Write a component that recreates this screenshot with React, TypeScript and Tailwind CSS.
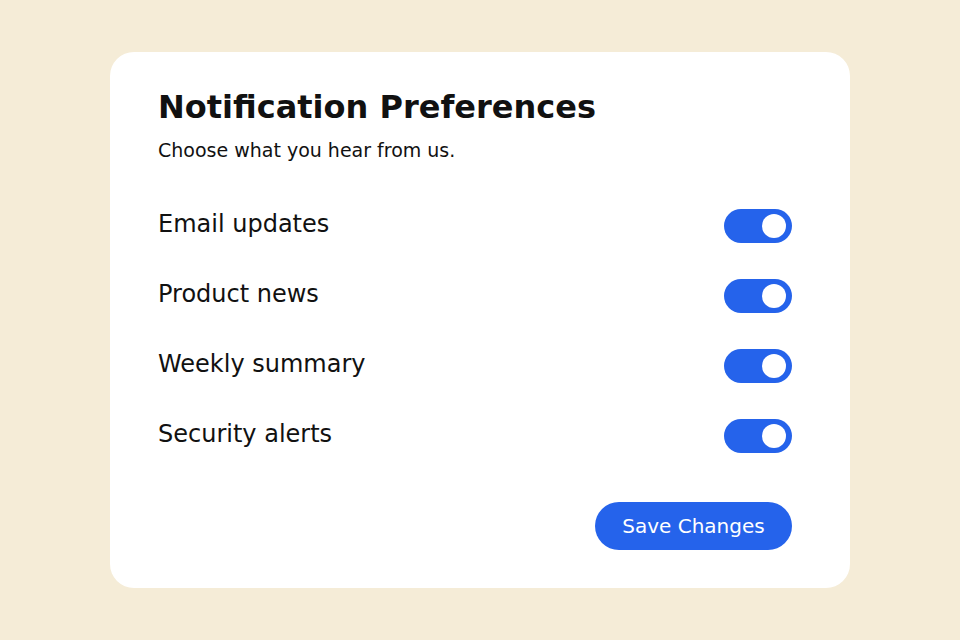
import React, { useState } from 'react';

const items = ['Email updates', 'Product news', 'Weekly summary', 'Security alerts'];

const Toggle: React.FC<{ on: boolean; onChange: () => void }> = ({ on, onChange }) => (
  <button
    onClick={onChange}
    className={`relative w-[68px] h-[34px] rounded-full flex items-center shrink-0 ${on ? 'bg-[#2563eb] justify-end' : 'bg-gray-300 justify-start'}`}
  >
    <span className="w-[24px] h-[24px] rounded-full bg-white mx-[6px]" />
  </button>
);

export default function App() {
  const [state, setState] = useState<boolean[]>([true, true, true, true]);

  return (
    <div className="w-full h-[640px] bg-[#f5ecd7] flex items-center justify-center font-['DejaVu_Sans',sans-serif] text-[#111111]">
      <div className="w-[740px] h-[536px] bg-white rounded-[24px] pt-[36px] pb-[38px] pl-12 pr-[58px] flex flex-col">
        <h1 className="text-[32px] leading-[38px] font-bold">Notification Preferences</h1>
        <p className="mt-[11px] text-[19px] leading-[27px]">Choose what you hear from us.</p>
        <div className="mt-[27px] flex flex-col">
          {items.map((label, i) => (
            <div key={label} className="h-[70px] flex items-center justify-between">
              <span className="text-[24px] leading-[36px] mb-[5px]">{label}</span>
              <Toggle
                on={state[i]}
                onChange={() => setState(s => s.map((v, j) => (j === i ? !v : v)))}
              />
            </div>
          ))}
        </div>
        <div className="mt-[31px] flex justify-end">
          <button className="h-[48px] w-[197px] flex items-center justify-center rounded-full bg-[#2563eb] text-white text-[20px] leading-none">
            Save Changes
          </button>
        </div>
      </div>
    </div>
  );
}
